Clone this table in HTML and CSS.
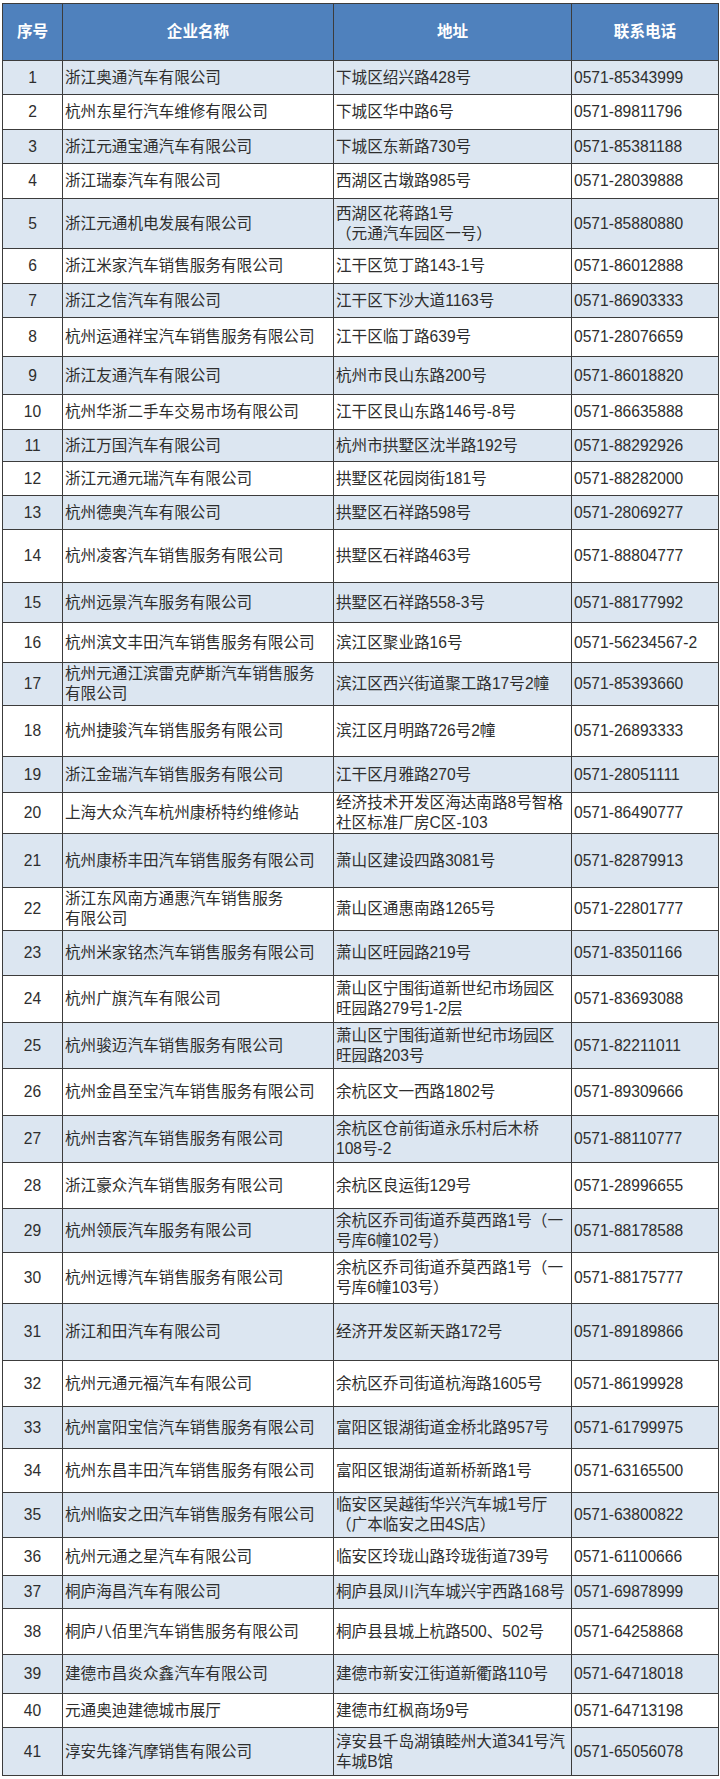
FILE: index.html
```html
<!DOCTYPE html>
<html lang="zh-CN">
<head>
<meta charset="utf-8">
<title>企业名录</title>
<link rel="stylesheet" href="styles.css">
</head>
<body>
<table class="sheet">
<colgroup><col class="c-no"><col class="c-name"><col class="c-addr"><col class="c-tel"></colgroup>
<thead>
<tr class="head"><th>序号</th><th>企业名称</th><th>地址</th><th>联系电话</th></tr>
</thead>
<tbody>
<tr class="h34"><td>1</td><td>浙江奥通汽车有限公司</td><td>下城区绍兴路428号</td><td>0571-85343999</td></tr>
<tr class="h35"><td>2</td><td>杭州东星行汽车维修有限公司</td><td>下城区华中路6号</td><td>0571-89811796</td></tr>
<tr class="h34"><td>3</td><td>浙江元通宝通汽车有限公司</td><td>下城区东新路730号</td><td>0571-85381188</td></tr>
<tr class="h35"><td>4</td><td>浙江瑞泰汽车有限公司</td><td>西湖区古墩路985号</td><td>0571-28039888</td></tr>
<tr class="h50"><td>5</td><td>浙江元通机电发展有限公司</td><td>西湖区花蒋路1号<br>（元通汽车园区一号）</td><td>0571-85880880</td></tr>
<tr class="h35"><td>6</td><td>浙江米家汽车销售服务有限公司</td><td>江干区笕丁路143-1号</td><td>0571-86012888</td></tr>
<tr class="h34"><td>7</td><td>浙江之信汽车有限公司</td><td>江干区下沙大道1163号</td><td>0571-86903333</td></tr>
<tr class="h39"><td>8</td><td>杭州运通祥宝汽车销售服务有限公司</td><td>江干区临丁路639号</td><td>0571-28076659</td></tr>
<tr class="h38"><td>9</td><td>浙江友通汽车有限公司</td><td>杭州市艮山东路200号</td><td>0571-86018820</td></tr>
<tr class="h35"><td>10</td><td>杭州华浙二手车交易市场有限公司</td><td>江干区艮山东路146号-8号</td><td>0571-86635888</td></tr>
<tr class="h32"><td>11</td><td>浙江万国汽车有限公司</td><td>杭州市拱墅区沈半路192号</td><td>0571-88292926</td></tr>
<tr class="h34"><td>12</td><td>浙江元通元瑞汽车有限公司</td><td>拱墅区花园岗街181号</td><td>0571-88282000</td></tr>
<tr class="h34"><td>13</td><td>杭州德奥汽车有限公司</td><td>拱墅区石祥路598号</td><td>0571-28069277</td></tr>
<tr class="h53"><td>14</td><td>杭州凌客汽车销售服务有限公司</td><td>拱墅区石祥路463号</td><td>0571-88804777</td></tr>
<tr class="h40"><td>15</td><td>杭州远景汽车服务有限公司</td><td>拱墅区石祥路558-3号</td><td>0571-88177992</td></tr>
<tr class="h40"><td>16</td><td>杭州滨文丰田汽车销售服务有限公司</td><td>滨江区聚业路16号</td><td>0571-56234567-2</td></tr>
<tr class="h43"><td>17</td><td>杭州元通江滨雷克萨斯汽车销售服务<br>有限公司</td><td>滨江区西兴街道聚工路17号2幢</td><td>0571-85393660</td></tr>
<tr class="h51"><td>18</td><td>杭州捷骏汽车销售服务有限公司</td><td>滨江区月明路726号2幢</td><td>0571-26893333</td></tr>
<tr class="h36"><td>19</td><td>浙江金瑞汽车销售服务有限公司</td><td>江干区月雅路270号</td><td>0571-28051111</td></tr>
<tr class="h41"><td>20</td><td>上海大众汽车杭州康桥特约维修站</td><td>经济技术开发区海达南路8号智格<br>社区标准厂房C区-103</td><td>0571-86490777</td></tr>
<tr class="h54"><td>21</td><td>杭州康桥丰田汽车销售服务有限公司</td><td>萧山区建设四路3081号</td><td>0571-82879913</td></tr>
<tr class="h43"><td>22</td><td>浙江东风南方通惠汽车销售服务<br>有限公司</td><td>萧山区通惠南路1265号</td><td>0571-22801777</td></tr>
<tr class="h45"><td>23</td><td>杭州米家铭杰汽车销售服务有限公司</td><td>萧山区旺园路219号</td><td>0571-83501166</td></tr>
<tr class="h47"><td>24</td><td>杭州广旗汽车有限公司</td><td>萧山区宁围街道新世纪市场园区<br>旺园路279号1-2层</td><td>0571-83693088</td></tr>
<tr class="h46"><td>25</td><td>杭州骏迈汽车销售服务有限公司</td><td>萧山区宁围街道新世纪市场园区<br>旺园路203号</td><td>0571-82211011</td></tr>
<tr class="h47"><td>26</td><td>杭州金昌至宝汽车销售服务有限公司</td><td>余杭区文一西路1802号</td><td>0571-89309666</td></tr>
<tr class="h47"><td>27</td><td>杭州吉客汽车销售服务有限公司</td><td>余杭区仓前街道永乐村后木桥<br>108号-2</td><td>0571-88110777</td></tr>
<tr class="h46"><td>28</td><td>浙江豪众汽车销售服务有限公司</td><td>余杭区良运街129号</td><td>0571-28996655</td></tr>
<tr class="h44"><td>29</td><td>杭州领辰汽车服务有限公司</td><td>余杭区乔司街道乔莫西路1号（一<br>号库6幢102号）</td><td>0571-88178588</td></tr>
<tr class="h51"><td>30</td><td>杭州远博汽车销售服务有限公司</td><td>余杭区乔司街道乔莫西路1号（一<br>号库6幢103号）</td><td>0571-88175777</td></tr>
<tr class="h57"><td>31</td><td>浙江和田汽车有限公司</td><td>经济开发区新天路172号</td><td>0571-89189866</td></tr>
<tr class="h46"><td>32</td><td>杭州元通元福汽车有限公司</td><td>余杭区乔司街道杭海路1605号</td><td>0571-86199928</td></tr>
<tr class="h42"><td>33</td><td>杭州富阳宝信汽车销售服务有限公司</td><td>富阳区银湖街道金桥北路957号</td><td>0571-61799975</td></tr>
<tr class="h44"><td>34</td><td>杭州东昌丰田汽车销售服务有限公司</td><td>富阳区银湖街道新桥新路1号</td><td>0571-63165500</td></tr>
<tr class="h45"><td>35</td><td>杭州临安之田汽车销售服务有限公司</td><td>临安区吴越街华兴汽车城1号厅<br>（广本临安之田4S店）</td><td>0571-63800822</td></tr>
<tr class="h38"><td>36</td><td>杭州元通之星汽车有限公司</td><td>临安区玲珑山路玲珑街道739号</td><td>0571-61100666</td></tr>
<tr class="h33"><td>37</td><td>桐庐海昌汽车有限公司</td><td>桐庐县凤川汽车城兴宇西路168号</td><td>0571-69878999</td></tr>
<tr class="h46"><td>38</td><td>桐庐八佰里汽车销售服务有限公司</td><td>桐庐县县城上杭路500、502号</td><td>0571-64258868</td></tr>
<tr class="h39"><td>39</td><td>建德市昌炎众鑫汽车有限公司</td><td>建德市新安江街道新衢路110号</td><td>0571-64718018</td></tr>
<tr class="h34"><td>40</td><td>元通奥迪建德城市展厅</td><td>建德市红枫商场9号</td><td>0571-64713198</td></tr>
<tr class="h48"><td>41</td><td>淳安先锋汽摩销售有限公司</td><td>淳安县千岛湖镇睦州大道341号汽<br>车城B馆</td><td>0571-65056078</td></tr>
</tbody>
</table>
</body>
</html>
```
FILE: styles.css
```css
html, body {
  margin: 0;
  padding: 0;
  background: #ffffff;
}

body {
  padding: 3px 0 0 2px;
  font-family: "Liberation Sans", "Noto Sans CJK SC", sans-serif;
  font-size: 15.6px;
  color: #2e2e2e;
}

.sheet {
  border-collapse: collapse;
  table-layout: fixed;
  width: 716px;
}

.c-no { width: 60px; }
.c-name { width: 271px; }
.c-addr { width: 238px; }
.c-tel { width: 147px; }

.sheet th,
.sheet td {
  border: 1px solid #3c3c3c;
  padding: 0 2px;
  line-height: 20px;
  vertical-align: middle;
  text-align: left;
  white-space: nowrap;
  overflow: hidden;
}

.sheet th {
  background: #4f81bd;
  color: #ffffff;
  font-weight: bold;
  text-align: center;
}

.sheet td:first-child {
  text-align: center;
}

.sheet tbody tr:nth-child(odd) td {
  background: #dce6f1;
}

.head { height: 57px; }
.h32 { height: 32px; }
.h33 { height: 33px; }
.h34 { height: 34px; }
.h35 { height: 35px; }
.h36 { height: 36px; }
.h38 { height: 38px; }
.h39 { height: 39px; }
.h40 { height: 40px; }
.h41 { height: 41px; }
.h42 { height: 42px; }
.h43 { height: 43px; }
.h44 { height: 44px; }
.h45 { height: 45px; }
.h46 { height: 46px; }
.h47 { height: 47px; }
.h48 { height: 48px; }
.h50 { height: 50px; }
.h51 { height: 51px; }
.h53 { height: 53px; }
.h54 { height: 54px; }
.h57 { height: 57px; }
```
